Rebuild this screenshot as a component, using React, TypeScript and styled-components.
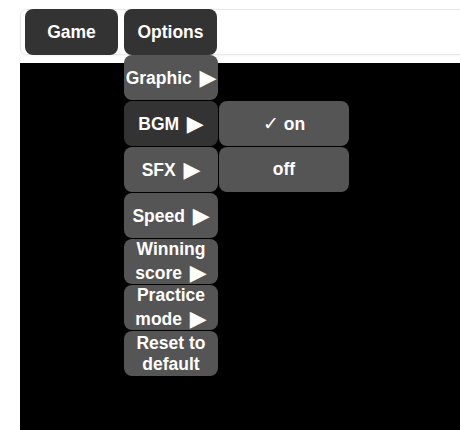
import styled, { createGlobalStyle } from "styled-components";

const GlobalStyle = createGlobalStyle`
  html, body {
    margin: 0;
    padding: 0;
    background: #fff;
    overflow: hidden;
  }
  body {
    font-family: "Liberation Sans", Arial, "DejaVu Sans", sans-serif;
  }
`;

const OPTIONS = [
  { label: "Graphic", sub: true },
  { label: "BGM", sub: true, active: true },
  { label: "SFX", sub: true },
  { label: "Speed", sub: true },
  { label: "Winning score", sub: true },
  { label: "Practice mode", sub: true },
  { label: "Reset to default", sub: false },
];

const BGM_CHOICES = [
  { label: "on", checked: true },
  { label: "off", checked: false },
];

const App = () => {
  return (
    <>
      <GlobalStyle />
      <Page>
        <Toolbar>
          <MenuWrap>
            <MenuButton type="button">Game</MenuButton>
          </MenuWrap>
          <MenuWrap>
            <MenuButton type="button">Options</MenuButton>
            <Dropdown>
              {OPTIONS.map((opt) => (
                <ItemWrap key={opt.label}>
                  <Item type="button" $active={opt.active}>
                    {opt.label}
                    {opt.sub && <Arrow> ▶</Arrow>}
                  </Item>
                  {opt.active && (
                    <SubMenu>
                      {BGM_CHOICES.map((c) => (
                        <SubItem key={c.label} type="button">
                          {c.checked && <Check>✓</Check>}
                          {c.checked ? " " : ""}
                          {c.label}
                        </SubItem>
                      ))}
                    </SubMenu>
                  )}
                </ItemWrap>
              ))}
            </Dropdown>
          </MenuWrap>
        </Toolbar>
        <Canvas />
      </Page>
    </>
  );
};

const Page = styled.div`
  width: 500px;
  padding: 9px 0 0 20px;
  display: flex;
  flex-direction: column;
  gap: 8px;
`;

const Toolbar = styled.div`
  display: flex;
  gap: 6px;
  height: 46px;
  padding-left: 4px;
  border: 1px solid #e6e8eb;
  border-radius: 6px;
  box-sizing: border-box;
  box-shadow: 0 1px 2px rgba(0, 0, 0, 0.04);
  position: relative;
  z-index: 2;
`;

const MenuWrap = styled.div`
  position: relative;
  margin-top: -1px;
`;

const MenuButton = styled.button`
  width: 93px;
  height: 46px;
  border: none;
  border-radius: 8px;
  background: #333;
  color: #fff;
  font-family: inherit;
  font-size: 17.5px;
  font-weight: bold;
  cursor: pointer;
`;

const Dropdown = styled.div`
  position: absolute;
  top: 46px;
  left: 0;
  display: flex;
  flex-direction: column;
  gap: 1px;
`;

const ItemWrap = styled.div`
  position: relative;
`;

const Item = styled.button<{ $active?: boolean }>`
  display: block;
  width: 94px;
  height: 45px;
  padding: 0 1px;
  border: none;
  border-radius: 8px;
  background: ${(p) => (p.$active ? "#333" : "#555")};
  color: #fff;
  font-family: inherit;
  font-size: 17.5px;
  font-weight: bold;
  line-height: 21px;
  cursor: pointer;
`;

const Arrow = styled.span`
  font-family: "DejaVu Sans", sans-serif;
  font-size: 22px;
  line-height: 25px;
  vertical-align: -1px;
`;

const SubMenu = styled.div`
  position: absolute;
  top: 0;
  left: 95px;
  display: flex;
  flex-direction: column;
  gap: 1px;
`;

const SubItem = styled.button`
  width: 130px;
  height: 45px;
  border: none;
  border-radius: 8px;
  background: #555;
  color: #fff;
  font-family: inherit;
  font-size: 17.5px;
  font-weight: bold;
  cursor: pointer;
`;

const Check = styled.span`
  font-family: "DejaVu Sans", sans-serif;
  font-size: 19px;
`;

const Canvas = styled.div`
  height: 400px;
  background: #000;
`;

export default App;
